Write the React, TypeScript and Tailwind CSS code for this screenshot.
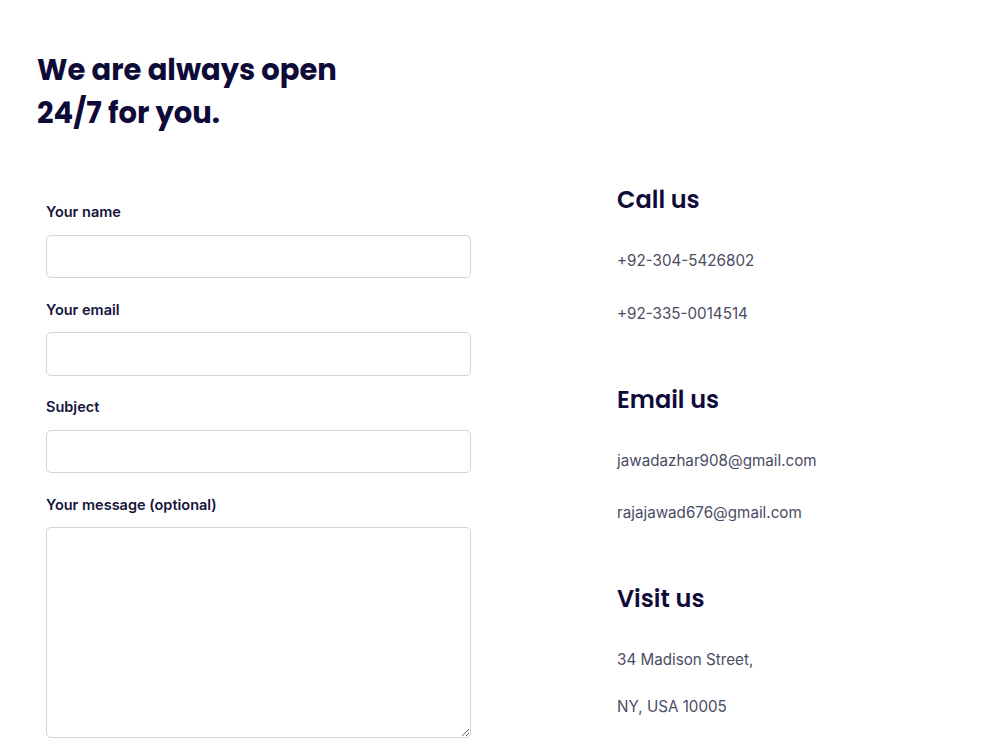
import React from "react";

const heading = "font-['Poppins','Inter',sans-serif] text-[#0e0b38]";
const body = "font-['Inter','Noto_Sans',sans-serif]";

function Field({ label, tall }: { label: string; tall?: boolean }) {
  return (
    <div className="flex flex-col">
      <label className={`${body} text-[14.5px] leading-[20px] font-semibold text-[#16143a]`}>{label}</label>
      {tall ? (
        <textarea className="mt-[12.5px] h-[211px] w-full rounded-[5px] border border-[#d4d4d8] bg-white outline-none" />
      ) : (
        <input className="mt-[12.5px] h-[43.5px] w-full rounded-[5px] border border-[#d4d4d8] bg-white outline-none" />
      )}
    </div>
  );
}

function Info({ title, lines, gap }: { title: string; lines: string[]; gap: number }) {
  return (
    <div>
      <h3 className={`${heading} text-[24px] leading-[32px] font-semibold`}>{title}</h3>
      <div className="mt-[33px] flex flex-col" style={{ gap }}>
        {lines.map((l) => (
          <p key={l} className={`${body} text-[15.2px] leading-[24px] text-[#4a4c63]`}>
            {l}
          </p>
        ))}
      </div>
    </div>
  );
}

export default function App() {
  return (
    <div className="min-h-screen bg-white px-[37px] pt-[49px]">
      <h1 className={`${heading} text-[29px] leading-[43px] font-bold`}>
        We are always open
        <br />
        24/7 for you.
      </h1>
      <div className="mt-[67px] flex">
        <form className="ml-[9px] flex w-[425px] flex-col gap-[21.5px]">
          <Field label="Your name" />
          <Field label="Your email" />
          <Field label="Subject" />
          <Field label="Your message (optional)" tall />
        </form>
        <div className="ml-[146px] -mt-[18px] flex flex-col gap-[58px]">
          <Info title="Call us" lines={["+92-304-5426802", "+92-335-0014514"]} gap={29} />
          <Info title="Email us" lines={["jawadazhar908@gmail.com", "rajajawad676@gmail.com"]} gap={28} />
          <Info title="Visit us" lines={["34 Madison Street,", "NY, USA 10005"]} gap={23} />
        </div>
      </div>
    </div>
  );
}
